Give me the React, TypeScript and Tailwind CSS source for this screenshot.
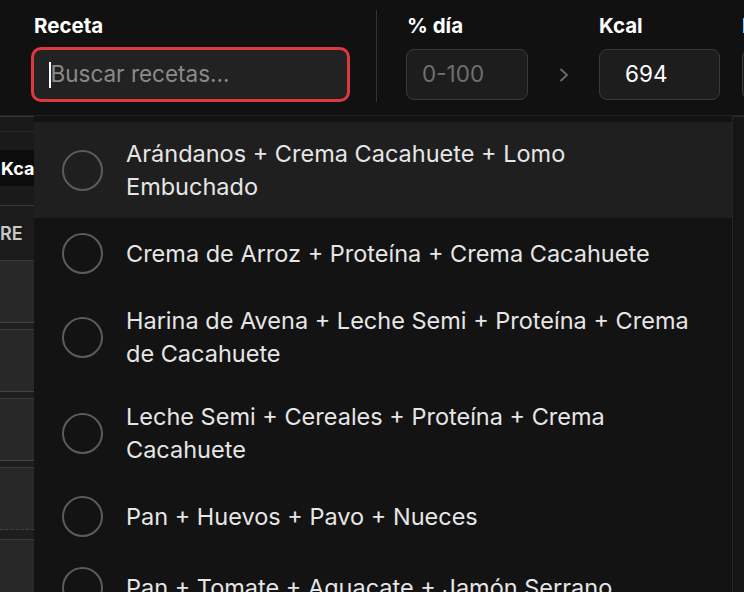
import React from "react";

const items = [
  "Arándanos + Crema Cacahuete + Lomo Embuchado",
  "Crema de Arroz + Proteína + Crema Cacahuete",
  "Harina de Avena + Leche Semi + Proteína + Crema de Cacahuete",
  "Leche Semi + Cereales + Proteína + Crema Cacahuete",
  "Pan + Huevos + Pavo + Nueces",
  "Pan + Tomate + Aguacate + Jamón Serrano",
];

export default function App() {
  return (
    <div
      className="relative w-[744px] h-[592px] overflow-hidden bg-[#111111] text-white"
      style={{ fontFamily: "Inter, 'Noto Sans', sans-serif" }}
    >
      {/* Header */}
      <div className="flex items-end h-[116px] border-b border-[#222222] pl-[31px] pb-[13px] whitespace-nowrap">
        <div className="flex flex-col w-[319px] shrink-0">
          <div className="pl-[3px] text-[20.5px] font-bold leading-[24px] mb-[9px]">Receta</div>
          <div className="h-[55px] rounded-[10px] border-[3px] border-[#e0383f] bg-[#222222] flex items-center pl-[15px]">
            <span className="w-[1.5px] h-[26px] bg-white" />
            <span className="text-[22.5px] text-[#8a8a8a] leading-none">Buscar recetas...</span>
          </div>
        </div>
        <div className="ml-[26px] w-px h-[92px] bg-[#333333] shrink-0" />
        <div className="ml-[29px] flex flex-col w-[122px] shrink-0">
          <div className="pl-[1px] text-[20.5px] font-bold leading-[24px] mb-[11px]">% día</div>
          <div className="h-[51px] mb-[2px] rounded-[8px] border border-[#3a3a3a] bg-[#1d1d1d] flex items-center pl-[15px]">
            <span className="text-[22.5px] text-[#6f6f6f] leading-none">0-100</span>
          </div>
        </div>
        <div className="w-[71px] h-[55px] flex items-center justify-center shrink-0">
          <svg width="14" height="16" viewBox="0 0 14 16" fill="none">
            <path d="M4 2.5 L10 8 L4 13.5" stroke="#6b6b6b" strokeWidth="1.8" strokeLinecap="round" strokeLinejoin="round" />
          </svg>
        </div>
        <div className="flex flex-col w-[121px] shrink-0">
          <div className="text-[20.5px] font-bold leading-[24px] mb-[11px]">Kcal</div>
          <div className="h-[51px] mb-[2px] rounded-[8px] border border-[#3a3a3a] bg-[#1d1d1d] flex items-center pl-[25px]">
            <span className="text-[22.5px] text-white leading-none">694</span>
          </div>
        </div>
        <div className="ml-[22px] flex flex-col w-[121px] shrink-0">
          <div className="text-[20.5px] font-bold leading-[24px] mb-[11px]">P</div>
          <div className="h-[51px] mb-[2px] rounded-[8px] border border-[#3a3a3a] bg-[#1d1d1d]" />
        </div>
      </div>

      {/* Background table strip */}
      <div className="flex">
        <div className="w-[34px] shrink-0 flex flex-col bg-[#1a1a1a] border-t border-[#383838]">
          <div className="h-[15px] border-b border-[#2a2a2a]" />
          <div className="h-[18px]" />
          <div className="h-[36px] bg-[#0c0c0c] flex items-center text-[18px] font-bold overflow-hidden whitespace-nowrap pl-[1px]">
            Kca
          </div>
          <div className="h-[20px] border-b border-[#3a3a3a]" />
          <div className="h-[55px] bg-[#1b1b1b] flex items-center text-[18px] font-semibold text-[#c8c8c8] border-b border-[#3a3a3a] overflow-hidden whitespace-nowrap">
            RE
          </div>
          <div className="h-[62px] bg-[#282828] border-b border-[#444444]" />
          <div className="h-[7px] bg-[#1e1e1e] border-b border-[#3a3a3a]" />
          <div className="h-[62px] bg-[#282828] border-b border-[#444444]" />
          <div className="h-[7px] bg-[#1e1e1e] border-b border-[#3a3a3a]" />
          <div className="h-[62px] bg-[#282828] border-b border-[#444444]" />
          <div className="h-[7px] bg-[#1e1e1e] border-b border-[#3a3a3a]" />
          <div className="h-[62px] bg-[#282828] border-b border-dashed border-[#444444]" />
          <div className="h-[10px] bg-[#1e1e1e] border-b border-[#3a3a3a]" />
          <div className="h-[60px] bg-[#282828]" />
        </div>
        <div className="flex-1" />
        <div className="w-[11px] shrink-0 h-[480px] bg-[#151515] border-t border-[#2a2a2a]" />
      </div>

      {/* Dropdown */}
      <div className="absolute left-[34px] top-[117px] w-[699px] h-[480px] bg-[#131313] border-r border-[#262626] pt-[5px]">
        {items.map((t, i) => (
          <div
            key={i}
            className={`flex items-center pl-[28px] py-[15px] ${i === 0 ? "bg-[#1f1f1f]" : ""}`}
          >
            <div className="w-[41px] h-[41px] rounded-full border-[2.5px] border-[#5c5c5c] shrink-0" />
            <div className="ml-[23px] w-[572px] text-[23.5px] leading-[33px] text-[#e6e6e6]">{t}</div>
          </div>
        ))}
      </div>
    </div>
  );
}
